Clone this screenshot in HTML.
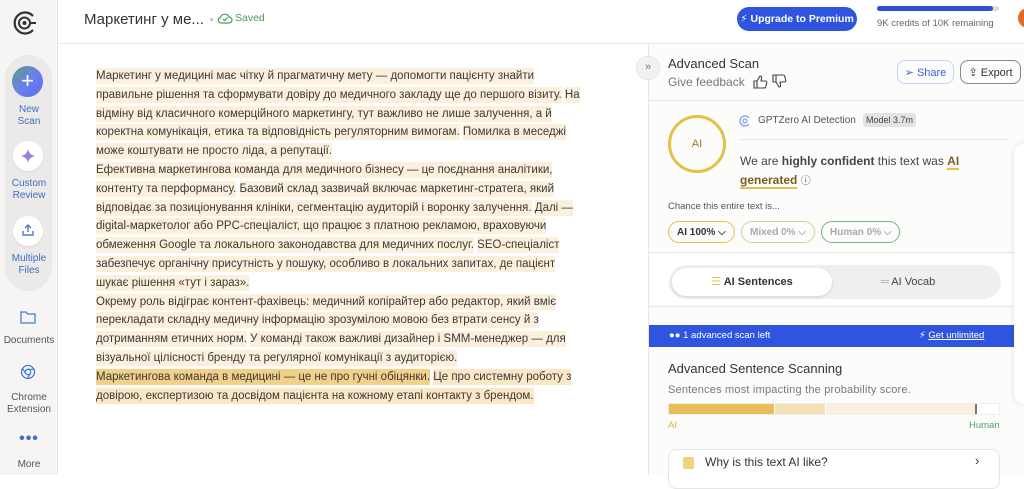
<!DOCTYPE html>
<html><head><meta charset="utf-8"><style>
*{box-sizing:border-box;margin:0;padding:0}
body{width:1024px;height:475px;overflow:hidden;background:#fff;font-family:"Liberation Sans","DejaVu Sans",sans-serif;color:#333;position:relative}
.abs{position:absolute}
#side{left:0;top:0;width:58px;height:475px;background:#f6f5f3;border-right:1px solid #e6e5e3}
.pill{left:5px;top:55px;width:47px;height:236px;background:#ebeae8;border-radius:24px}
.circ{width:30px;height:30px;border-radius:50%;background:#fff;left:13px;box-shadow:0 1px 2px rgba(0,0,0,.08)}
.sl{width:58px;text-align:center;font-size:10px;line-height:12px;color:#3d6fc4;left:0}
.sg{color:#555}
#hdr{left:59px;top:0;width:965px;height:44px;border-bottom:1px solid #e8e8e8;background:#fff}
.txt{left:96px;top:67px;font-size:11.5px;line-height:18.8px;color:#3a3a3a;white-space:nowrap}
.txt span{background:#fcefdc;padding:2px 0}
.txt span.d{background:#f1d08a}
.txt span.m{background:#fbe6c6}
#rp{left:648px;top:45px;width:376px;height:430px;border-left:1px solid #e6e6e6;background:#fcfcfb}
.btn{border-radius:8px;font-size:11px;height:24px;display:flex;align-items:center;justify-content:center;gap:5px}
.chip{height:22px;border-radius:11px;border:1.5px solid;font-size:10px;display:flex;align-items:center;padding:0 8px;font-weight:bold}
</style></head><body>
<div id="side" class="abs">
 <svg class="abs" style="left:11px;top:10px" width="28" height="26" viewBox="0 0 28 26"><path d="M22 6A10.5 10.5 0 1 0 22 20" fill="none" stroke="#333" stroke-width="2.2"/><circle cx="13.5" cy="13" r="5.5" fill="none" stroke="#333" stroke-width="2"/><circle cx="13.5" cy="13" r="2" fill="#333"/><path d="M19 13h6" stroke="#333" stroke-width="2"/></svg>
 <div class="pill abs"></div>
 <div class="abs" style="left:12px;top:66px;width:31px;height:31px;border-radius:50%;background:linear-gradient(135deg,#5aa17a,#6b7df0 55%,#5a6cf0);color:#fff;font-size:22px;line-height:29px;text-align:center">+</div>
 <div class="sl abs" style="top:104px">New<br>Scan</div>
 <div class="circ abs" style="top:141px"></div>
 <svg class="abs" style="left:20px;top:148px" width="16" height="16" viewBox="0 0 16 16"><path d="M8 1Q9 7 15 8Q9 9 8 15Q7 9 1 8Q7 7 8 1Z" fill="#9b7fd9"/></svg>
 <div class="sl abs" style="top:178px">Custom<br>Review</div>
 <div class="circ abs" style="top:216px"></div>
 <svg class="abs" style="left:21px;top:223px" width="14" height="14" viewBox="0 0 14 14"><path d="M7 9V2M4 5l3-3 3 3M2 8v4h10V8" fill="none" stroke="#4a7bd0" stroke-width="1.4"/></svg>
 <div class="sl abs" style="top:253px">Multiple<br>Files</div>
 <svg class="abs" style="left:20px;top:310px" width="16" height="14" viewBox="0 0 16 14"><path d="M1 2h5l1.5 2H15v9H1Z" fill="none" stroke="#4a7bd0" stroke-width="1.3"/></svg>
 <div class="sl sg abs" style="top:335px">Documents</div>
 <svg class="abs" style="left:20px;top:364px" width="16" height="16" viewBox="0 0 16 16"><circle cx="8" cy="8" r="6.5" fill="none" stroke="#4a7bd0" stroke-width="1.3"/><circle cx="8" cy="8" r="2.7" fill="none" stroke="#4a7bd0" stroke-width="1.3"/><path d="M8 5.3h6M5.7 9.4 2.6 4.3M10.3 9.4l-3 5.3" stroke="#4a7bd0" stroke-width="1.2"/></svg>
 <div class="sl sg abs" style="top:392px">Chrome<br>Extension</div>
 <div class="sl abs" style="top:433px;font-size:16px;letter-spacing:1px;font-weight:bold">•••</div>
 <div class="sl sg abs" style="top:459px">More</div>
</div>
<div id="hdr" class="abs">
 <div class="abs" style="left:25px;top:11px;font-size:15px;color:#333">Маркетинг у ме...</div>
 <div class="abs" style="left:151px;top:18px;width:3px;height:3px;border-radius:50%;background:#bbb"></div>
 <svg class="abs" style="left:158px;top:11px" width="16" height="14" viewBox="0 0 16 14"><path d="M4 12h8a3 3 0 0 0 0-6 4.5 4.5 0 0 0-8.5 0.5A2.8 2.8 0 0 0 4 12Z" fill="none" stroke="#4a9a5c" stroke-width="1.2"/><path d="M6 8l1.6 1.6L10.5 6.5" fill="none" stroke="#4a9a5c" stroke-width="1.2"/></svg>
 <div class="abs" style="left:176px;top:12px;font-size:10.5px;color:#4a9a5c">Saved</div>
 <div class="abs btn" style="left:678px;top:7px;width:120px;height:24px;border-radius:12px;background:#2f55e0;color:#fff;font-size:10.5px;font-weight:bold;white-space:nowrap">⚡ Upgrade to Premium</div>
 <div class="abs" style="left:818px;top:6px;width:122px;height:5px;border-radius:3px;background:#dcdcdc"><div style="width:116px;height:5px;border-radius:3px;background:#2f4fd8"></div></div>
 <div class="abs" style="left:818px;top:18px;font-size:9.5px;color:#666;white-space:nowrap">9K credits of 10K remaining</div>
 <div class="abs" style="left:959px;top:8px;width:20px;height:20px;border-radius:50%;background:#e06a2a"></div>
</div>
<div class="txt abs">
<div><span>Маркетинг у медицині має чітку й прагматичну мету — допомогти пацієнту знайти </span></div>
<div><span>правильне рішення та сформувати довіру до медичного закладу ще до першого візиту.</span> <span>На</span></div>
<div><span>відміну від класичного комерційного маркетингу, тут важливо не лише залучення, а й </span></div>
<div><span>коректна комунікація, етика та відповідність регуляторним вимогам.</span> <span>Помилка в меседжі </span></div>
<div><span>може коштувати не просто ліда, а репутації.</span></div>
<div><span>Ефективна маркетингова команда для медичного бізнесу — це поєднання аналітики, </span></div>
<div><span>контенту та перформансу.</span> <span>Базовий склад зазвичай включає маркетинг-стратега, який </span></div>
<div><span>відповідає за позиціонування клініки, сегментацію аудиторій і воронку залучення.</span> <span>Далі — </span></div>
<div><span>digital-маркетолог або PPC-спеціаліст, що працює з платною рекламою, враховуючи </span></div>
<div><span>обмеження Google та локального законодавства для медичних послуг.</span> <span>SEO-спеціаліст </span></div>
<div><span>забезпечує органічну присутність у пошуку, особливо в локальних запитах, де пацієнт </span></div>
<div><span>шукає рішення «тут і зараз».</span></div>
<div><span>Окрему роль відіграє контент-фахівець: медичний копірайтер або редактор, який вміє </span></div>
<div><span>перекладати складну медичну інформацію зрозумілою мовою без втрати сенсу й з </span></div>
<div><span>дотриманням етичних норм.</span> <span>У команді також важливі дизайнер і SMM-менеджер — для </span></div>
<div><span>візуальної цілісності бренду та регулярної комунікації з аудиторією.</span></div>
<div><span class="d">Маркетингова команда в медицині — це не про гучні обіцянки.</span> <span class="m">Це про системну роботу з </span></div>
<div><span class="m">довірою, експертизою та досвідом пацієнта на кожному етапі контакту з брендом.</span></div>
</div>
<div id="rp" class="abs">
 <div class="abs" style="left:-13px;top:11px;width:24px;height:24px;border-radius:50%;background:#f2f2f2;border:1px solid #e4e4e4;font-size:11px;color:#777;text-align:center;line-height:21px">»</div>
 <div class="abs" style="left:19px;top:11px;font-size:13px;color:#333">Advanced Scan</div>
 <div class="abs" style="left:19px;top:30px;font-size:12px;color:#777">Give feedback</div>
 <svg class="abs" style="left:104px;top:29px" width="34" height="15" viewBox="0 0 34 15"><path d="M1 7h3v7H1ZM4 7l3-5c1.5 0 1.8 1 1.5 2.5L8 7h4.5c1 0 1.5 1 1.2 2l-1 4c-.3.8-1 1-1.8 1H4" fill="none" stroke="#444" stroke-width="1.1"/><path d="M20 1h3v7h-3ZM23 8l3 5c1.5 0 1.8-1 1.5-2.5L27 8h4.5c1 0 1.5-1 1.2-2l-1-4c-.3-.8-1-1-1.8-1H23" fill="none" stroke="#444" stroke-width="1.1"/></svg>
 <div class="abs btn" style="left:248px;top:15px;width:57px;border:1px solid #c4d2f4;color:#3b62d6">➢ Share</div>
 <div class="abs btn" style="left:311px;top:15px;width:61px;border:1px solid #888;color:#333">⇪ Export</div>
 <div class="abs" style="left:0;top:55px;width:376px;border-top:1px solid #e8e8e8"></div>
 <div class="abs" style="left:19px;top:70px;width:58px;height:58px;border-radius:50%;border:3px solid #e3c04a;text-align:center;line-height:52px;font-size:11px;color:#9a7a20">AI</div>
 <svg class="abs" style="left:90px;top:70px" width="12" height="12" viewBox="0 0 12 12"><path d="M10 3A5 5 0 1 0 10 9" fill="none" stroke="#7fa7ee" stroke-width="1.4"/><circle cx="6" cy="6" r="2" fill="none" stroke="#7fa7ee" stroke-width="1.2"/></svg>
 <div class="abs" style="left:109px;top:70px;font-size:10px;color:#555">GPTZero AI Detection</div>
 <div class="abs" style="left:214px;top:68px;background:#e3e3e3;border-radius:3px;font-size:9px;padding:2px 3px;color:#444">Model 3.7m</div>
 <div class="abs" style="left:91px;top:94px;width:268px;border-top:1px solid #e6e6e6"></div>
 <div class="abs" style="left:91px;top:107px;font-size:12px;line-height:19px;color:#444;width:260px">We are <b>highly confident</b> this text was <b style="color:#7a6020;border-bottom:2px solid #e3c04a">AI generated</b> <span style="font-size:10px">ⓘ</span></div>
 <div class="abs" style="left:19px;top:156px;font-size:9.5px;color:#555">Chance this entire text is...</div>
 <div class="abs chip" style="left:19px;top:176px;border-color:#e3c04a;color:#333">AI 100% ⌵</div>
 <div class="abs chip" style="left:92px;top:176px;border-color:#d4d09a;color:#aaa">Mixed 0% ⌵</div>
 <div class="abs chip" style="left:172px;top:176px;border-color:#79b18a;color:#aaa">Human 0% ⌵</div>
 <div class="abs" style="left:0;top:207px;width:376px;border-top:1px solid #e8e8e8;height:52px;background:#fff"></div>
 <div class="abs" style="left:20px;top:220px;width:332px;height:34px;border-radius:17px;background:#efefef"></div>
 <div class="abs" style="left:23px;top:223px;width:160px;height:28px;border-radius:14px;background:#fff;box-shadow:0 1px 3px rgba(0,0,0,.12);font-size:11px;font-weight:bold;color:#333;text-align:center;line-height:28px"><span style="color:#e3c04a">☰</span> AI Sentences</div>
 <div class="abs" style="left:232px;top:223px;width:100px;height:28px;font-size:11px;color:#444;line-height:28px"><span style="color:#aaa">═</span> AI Vocab</div>
 <div class="abs" style="left:0;top:261px;width:376px;border-top:1px solid #e8e8e8"></div>
 <div class="abs" style="left:0;top:280px;width:366px;height:22px;background:#2f55e0;color:#fff;font-size:9.5px;line-height:22px"><span style="margin-left:20px">●● 1 advanced scan left</span><span style="position:absolute;left:270px">⚡ <u>Get unlimited</u></span></div>
 <div class="abs" style="left:19px;top:316px;font-size:13px;color:#333">Advanced Sentence Scanning</div>
 <div class="abs" style="left:19px;top:339px;font-size:11px;color:#777;letter-spacing:.2px">Sentences most impacting the probability score.</div>
 <div class="abs" style="left:19px;top:358px;width:332px;height:12px;border:1px solid #eee;background:#fff;display:flex">
  <div style="width:105px;background:#e9bd5c"></div><div style="width:51px;background:#f5e0b4;border-left:1px solid #fff"></div><div style="width:150px;background:#fbf0dc;border-left:1px solid #fff"></div><div style="width:2px;background:#777"></div>
 </div>
 <div class="abs" style="left:19px;top:375px;font-size:9.5px;color:#d9b441">AI</div>
 <div class="abs" style="left:320px;top:375px;font-size:9.5px;color:#4f9e6e">Human</div>
 <div class="abs" style="left:19px;top:404px;width:332px;height:40px;border:1px solid #e6e6e6;border-radius:8px;background:#fff"></div>
 <div class="abs" style="left:34px;top:412px;width:11px;height:12px;background:#f0d37c;border-radius:2px"></div>
 <div class="abs" style="left:56px;top:410px;font-size:12px;color:#333">Why is this text AI like?</div>
 <div class="abs" style="left:326px;top:408px;font-size:13px;color:#333">›</div>
</div>
<div class="abs" style="left:1014px;top:143px;width:30px;height:262px;background:#fff;border-radius:12px;box-shadow:0 0 6px rgba(0,0,0,.12)"></div>
</body></html>
